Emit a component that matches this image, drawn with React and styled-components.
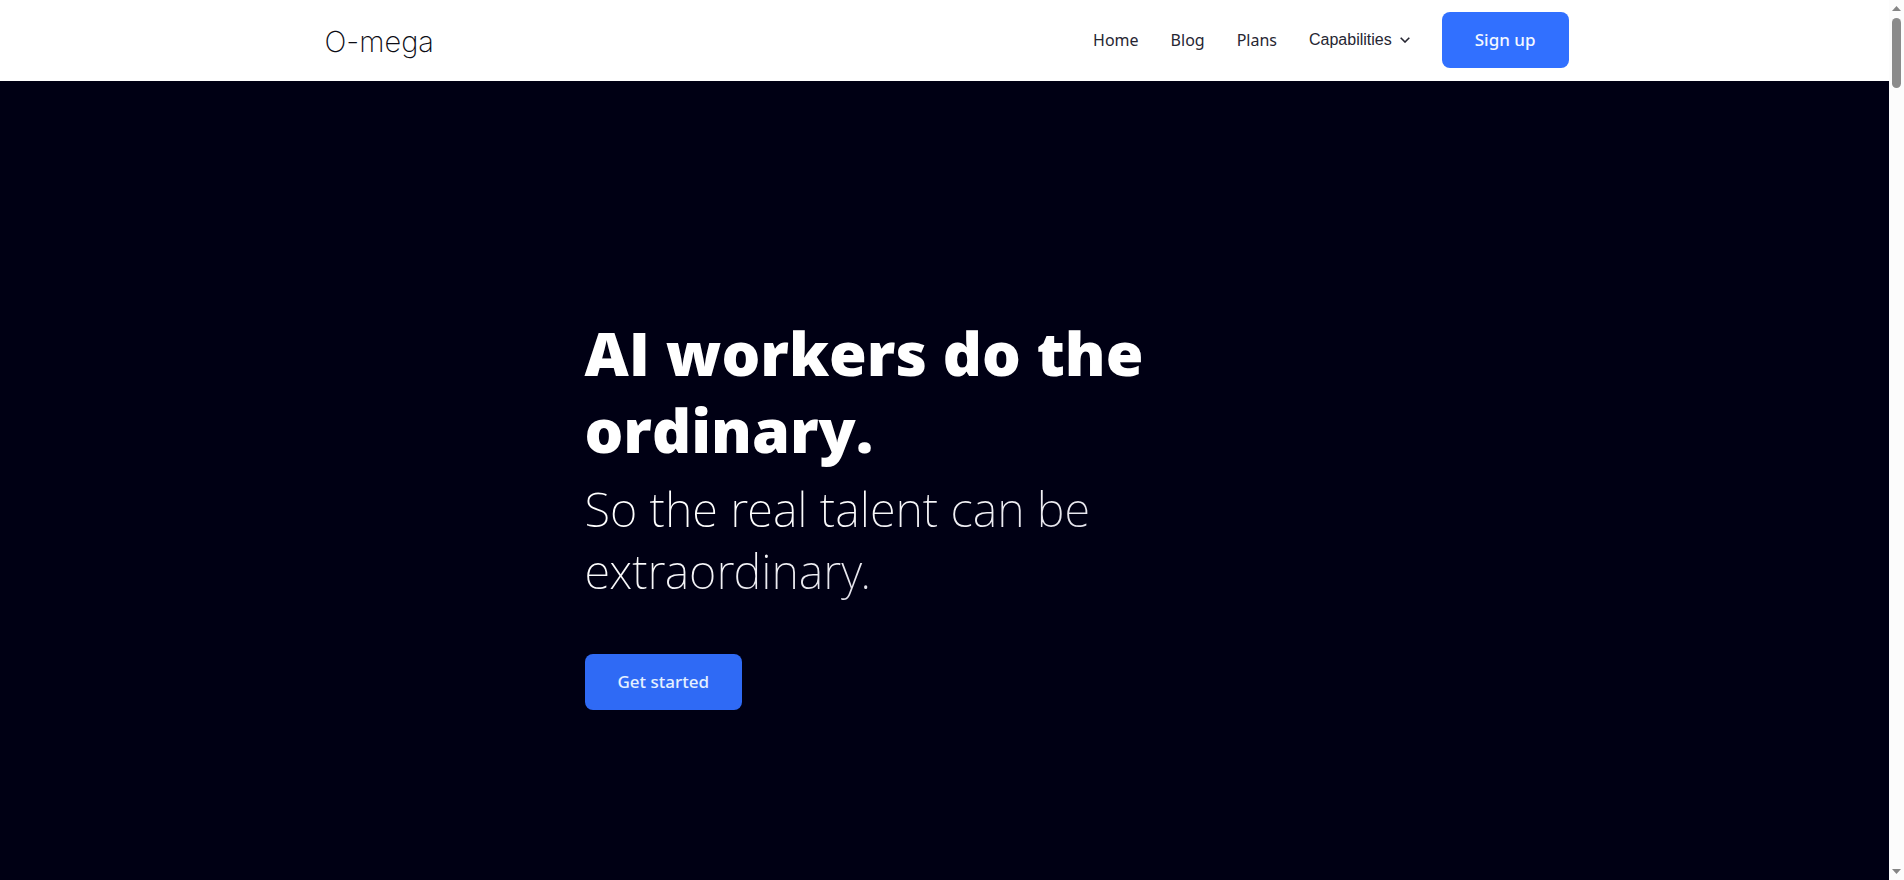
import React from "react";
import styled, { createGlobalStyle } from "styled-components";

const GlobalStyle = createGlobalStyle`
  *, *::before, *::after { box-sizing: border-box; }
  body {
    margin: 0;
    background: #000014;
    font-family: "Noto Sans", "Open Sans", sans-serif;
  }
`;

const Window = styled.div`
  display: flex;
  min-height: 100vh;
`;

const Page = styled.div`
  flex: 1;
  min-width: 0;
  display: flex;
  flex-direction: column;
`;

const Header = styled.header`
  background: #fff;
  padding: 12px 24px 13px;
`;

const HeaderInner = styled.div`
  display: flex;
  align-items: center;
  justify-content: space-between;
  max-width: 1248px;
  margin: 0 auto;
`;

const Logo = styled.a`
  padding: 4px 4px 0;
  color: #0c0c14;
  font-family: Inter, sans-serif;
  font-size: 29px;
  font-weight: 250;
  line-height: 36px;
  text-decoration: none;
`;

const Nav = styled.nav`
  display: flex;
  align-items: center;
  gap: 32px;
`;

const NavLink = styled.a`
  color: #262632;
  font-size: 16px;
  line-height: 24px;
  text-decoration: none;
`;

const MenuButton = styled.button`
  display: flex;
  align-items: center;
  gap: 8px;
  padding: 0;
  border: 0;
  background: none;
  color: #262632;
  font-family: "Liberation Sans", Arial, sans-serif;
  font-size: 16px;
  line-height: 24px;
  cursor: pointer;
`;

const Button = styled.button`
  height: 56px;
  padding: 0 33px;
  border: 0;
  border-radius: 8px;
  background: ${(p) => (p.$tone === "deep" ? "#2f6af5" : "#3170ff")};
  color: ${(p) => (p.$tone === "deep" ? "#e4f0ff" : "#f4f8ff")};
  font-family: inherit;
  font-size: 17px;
  font-weight: 500;
  line-height: 24px;
  cursor: pointer;
`;

const Hero = styled.main`
  flex: 1;
  display: flex;
  flex-direction: column;
  justify-content: center;
  padding: 62px 24px 0;
`;

const HeroContent = styled.section`
  width: 100%;
  max-width: 720px;
  margin: 0 auto;
`;

const Title = styled.h1`
  margin: 0;
  max-width: 600px;
  color: #fff;
  font-family: "Open Sans", sans-serif;
  font-size: 61px;
  font-weight: 800;
  line-height: 77px;
`;

const Subtitle = styled.p`
  margin: 10px 0 52px;
  max-width: 600px;
  background: linear-gradient(165deg, #fff 30%, #c8c6d8 100%);
  background-clip: text;
  color: transparent;
  font-size: 47px;
  font-weight: 230;
  line-height: 62px;
`;

const ScrollTrack = styled.div`
  width: 15px;
  display: flex;
  flex-direction: column;
  align-items: center;
  gap: 7px;
  padding: 6px 0;
  background: #fcfcfc;
`;

const ScrollThumb = styled.div`
  width: 9px;
  height: 70px;
  border-radius: 5px;
  background: #8b8b8b;
`;

const ScrollArrow = styled.svg`
  display: block;
  width: 9px;
  height: 5px;
  fill: #858585;
  margin-top: ${(p) => (p.$end ? "auto" : "0")};
`;

export default function App() {
  return (
    <Window>
      <GlobalStyle />
      <Page>
        <Header>
          <HeaderInner>
            <Logo href="#">O-mega</Logo>
            <Nav>
              <NavLink href="#home">Home</NavLink>
              <NavLink href="#blog">Blog</NavLink>
              <NavLink href="#plans">Plans</NavLink>
              <MenuButton type="button" aria-haspopup="true">
                Capabilities
                <svg width="10" height="6" viewBox="0 0 10 6" fill="none" stroke="currentColor" strokeWidth="1.6" aria-hidden="true">
                  <path d="M0.7 0.7 5 5 9.3 0.7" />
                </svg>
              </MenuButton>
              <Button type="button">Sign up</Button>
            </Nav>
          </HeaderInner>
        </Header>
        <Hero>
          <HeroContent>
            <Title>AI workers do the ordinary.</Title>
            <Subtitle>So the real talent can be extraordinary.</Subtitle>
            <Button type="button" $tone="deep">Get started</Button>
          </HeroContent>
        </Hero>
      </Page>
      <ScrollTrack aria-hidden="true">
        <ScrollArrow viewBox="0 0 9 5"><path d="M4.5 0 9 5H0z" /></ScrollArrow>
        <ScrollThumb />
        <ScrollArrow $end viewBox="0 0 9 5"><path d="M0 0h9L4.5 5z" /></ScrollArrow>
      </ScrollTrack>
    </Window>
  );
}
